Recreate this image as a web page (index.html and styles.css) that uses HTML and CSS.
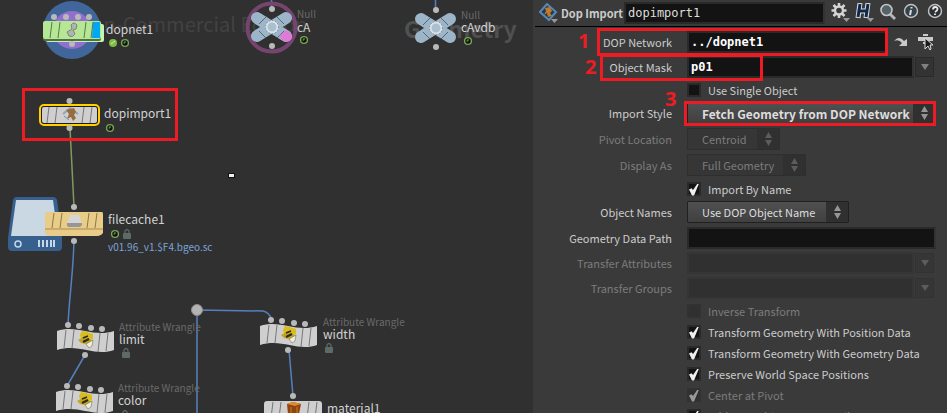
FILE: index.html
```
<!DOCTYPE html>
<html lang="en">
<head>
  <meta charset="UTF-8">
  <title>dopimport1</title>
  <link rel="stylesheet" href="styles.css">
</head>
<body>
  <main class="workspace">
    <section class="network">
      <svg class="graph" width="533" height="413">
        <defs>
          <g id="clock">
            <circle r="3.4" fill="#10130c" stroke="#79a656" stroke-width="1.4"/>
            <path d="M0-2V0H-1.5" fill="none" stroke="#79a656"/>
          </g>
          <g id="lock">
            <path d="M-2 0V-3Q0-6 2-3V0" fill="none" stroke="#5d6a68" stroke-width="1.3"/>
            <rect x="-4" y="-1" width="8" height="6" rx="1" fill="#5d6a68"/>
          </g>
          <g id="ticks" fill="none" stroke="#747474">
            <path d="M9 2L7 18M17 2L15 18M45 2L43 18M53 2L51 18"/>
          </g>
          <g id="wrangle">
            <path d="M0 2C20-5 36 9 57 2V21C38 28 22 14 0 21Z" fill="#cfcfcf"/>
            <path d="M9 1L7 19M17 1L15 19M43 4L41 23M51 4L49 22" stroke="#777" fill="none"/>
            <path d="M23 6L25 2 30 3 36 5 36 10 29 12 24 9Z" fill="#d9bd1d"/>
            <path d="M21 11L28 7 36 12 33 16 24 14Z" fill="#c2a51f"/>
            <path d="M26 9L31 7" stroke="#2b2a1c" stroke-width="1.5"/>
            <path d="M26 13L32 10" stroke="#2b2a1c" stroke-width="2"/>
            <path d="M29 15L36 11 35 17 32 19Z" fill="#eeeedd" stroke="#77734e" stroke-width=".6"/>
            <g fill="#b9b9b9">
              <circle cx="11" cy="-4" r="3"/><circle cx="22" cy="-3" r="3"/>
              <circle cx="34" cy="-1" r="3"/><circle cx="45" cy="0" r="3"/>
              <circle cx="28" cy="26" r="3"/>
            </g>
          </g>
          <g id="null">
            <path d="M-15-9L14 9M-15 9L14-9" stroke="#9db5c8" stroke-width="12" stroke-linecap="round"/>
            <path d="M-13-3L-6-10M5-10L12-3M-13 4L-6 11M5 11L12 4" stroke="#526879" fill="none"/>
            <circle r="5.5" fill="#a9c0d1" stroke="#e0e3e5" stroke-width="2"/>
            <circle r="6.5" fill="none" stroke="#6d8192" stroke-dasharray="1 2"/>
            <circle cy="-18" r="3" fill="#b9b9b9"/><circle cy="19" r="3" fill="#b9b9b9"/>
          </g>
        </defs>

        <text class="edition" x="77" y="32">Non-Commercial Edition</text>
        <text class="context" x="404" y="38">Geometry</text>

        <!-- wires -->
        <g class="wires">
          <path class="green" d="M70 128L74 207"/>
          <path d="M74 241C73 275 69 300 68 325"/>
          <path d="M85 355L67 386"/>
          <path d="M197 413V310L263 311Q269 312 272 320"/>
          <path d="M289 350L293 396"/>
          <path d="M271.500 0V9M435.500 0V9"/>
        </g>

        <!-- dopnet1 -->
        <circle cx="72" cy="30" r="29" fill="#40669b"/>
        <circle cx="72" cy="30" r="19" fill="#9070cc"/>
        <rect x="46" y="24" width="58" height="18" rx="2" fill="#c4f4b1"/>
        <rect x="43" y="22" width="58" height="19" rx="2" fill="#536f48"/>
        <rect x="43" y="21" width="58" height="18" rx="2" fill="#b5e795"/>
        <path d="M93 22H100V38H92Z" fill="#00a8f4"/>
        <path d="M52 22L50 38M60 22L58 38M86 22L84 38M93 22L91 38" stroke="#5d774e"/>
        <path d="M71 25Q74 21 77 25L76 29 73 30 75 34Q73 38 69 36L67 32 72 29Z" fill="#aeb4ae" stroke="#7c857b"/>
        <g fill="#b9b9b9">
          <circle cx="54" cy="17" r="3"/><circle cx="66" cy="17" r="3"/>
          <circle cx="78" cy="17" r="3"/><circle cx="89" cy="17" r="3"/>
          <circle cx="72" cy="44" r="3"/>
        </g>
        <text class="name" x="106" y="34">dopnet1</text>
        <circle cx="113" cy="43" r="4" fill="#7fbb45"/>
        <path d="M111 44L115 41" stroke="#d5edb5"/>
        <use href="#clock" x="125" y="43"/>

        <!-- cA, cAvdb -->
        <circle cx="271.500" cy="27.500" r="24" fill="none" stroke="#75456f" stroke-width="4"/>
        <use href="#null" x="272" y="27"/>
        <path d="M279 36L286 30Q292 33 292 38Q289 43 283 41Z" fill="#df7bd6"/>
        <text class="type" x="297" y="18">Null</text>
        <text class="name" x="297" y="32">cA</text>
        <use href="#clock" x="304" y="40"/>
        <use href="#null" x="436" y="28"/>
        <text class="type" x="461" y="19">Null</text>
        <text class="name" x="461" y="32">cAvdb</text>
        <use href="#clock" x="468" y="41"/>

        <!-- dopimport1 -->
        <rect x="40" y="105" width="59" height="20" rx="4" fill="#1d1d1d" stroke="#ffcf00" stroke-width="2"/>
        <rect x="42" y="107" width="55" height="16" rx="2" fill="#cfcfcf"/>
        <path d="M49 107L47 123M57 107L55 123M84 107L82 123M92 107L90 123" stroke="#777"/>
        <path d="M63 114L70 108 78 114" fill="none" stroke="#88a8c3" stroke-width="2"/>
        <path d="M66 110L74 108 76 112 74 115 76 118 73 121 71 117 67 119 69 114Z" fill="#9a6b3c"/>
        <path d="M64 116L69 120" stroke="#6c93b4"/>
        <circle cx="69.500" cy="101" r="3" fill="#b9b9b9"/>
        <circle cx="69.500" cy="128" r="3" fill="#b9b9b9"/>
        <text class="name" x="104" y="118">dopimport1</text>
        <use href="#clock" x="110" y="128"/>
        <rect x="23.500" y="89.500" width="153" height="50" fill="none" stroke="#ed1c24" stroke-width="3"/>

        <rect x="228" y="173" width="7" height="5" fill="#111"/>
        <rect x="229" y="174" width="5" height="3" fill="#eee"/>

        <!-- filecache1 -->
        <path d="M16 197H53Q56 197 57 200L62 238V247Q62 251 58 251H12Q8 251 8 247V238L13 200Q14 197 16 197Z" fill="#37608f"/>
        <path d="M16 200H53L58 236H11Z" fill="#c9d8e2"/>
        <circle cx="18" cy="244" r="3" fill="none" stroke="#c3d7e6" stroke-width="1.500"/>
        <path d="M39 240V247M43 240V247M47 240V247M51 240V247M54 240V247" stroke="#c3d7e6" stroke-width="2"/>
        <path d="M46 212H102Q103 212 103 214V233Q101 236 98 236H49Q45 235 45 232V213Z" fill="#e8cc88"/>
        <path d="M45 229H103" stroke="#a68c51"/>
        <path d="M54 213L52 228M62 213L60 228M89 213L87 228M97 213L95 228" stroke="#8d7947"/>
        <path d="M70 215H79L82 224H67Z" fill="#d5d5d5"/>
        <path d="M67 223H82V225Q81 227 79 227H70Q67 227 67 225Z" fill="#969696"/>
        <circle cx="74" cy="207" r="3" fill="#b9b9b9"/>
        <circle cx="74" cy="241" r="3" fill="#b9b9b9"/>
        <text class="name" x="108" y="224">filecache1</text>
        <use href="#clock" x="115" y="234"/>
        <use href="#lock" x="127" y="234"/>
        <text class="file" x="108" y="251">v01.96_v1.$F4.bgeo.sc</text>

        <!-- wrangles -->
        <use href="#wrangle" x="57" y="329"/>
        <text class="type" x="119" y="331">Attribute Wrangle</text>
        <text class="name" x="119" y="344">limit</text>
        <use href="#lock" x="126" y="353"/>
        <use href="#wrangle" x="56" y="390"/>
        <text class="type" x="118" y="392">Attribute Wrangle</text>
        <text class="name" x="118" y="405">color</text>
        <use href="#lock" x="125" y="415"/>
        <use href="#wrangle" x="260" y="324"/>
        <text class="type" x="323" y="326">Attribute Wrangle</text>
        <text class="name" x="323" y="339">width</text>
        <use href="#lock" x="329" y="348"/>
        <circle cx="197" cy="310" r="5.500" fill="#b4b4b4" stroke="#8c8c8c"/>

        <!-- material1 -->
        <rect x="264" y="401" width="58" height="20" rx="3" fill="#cfcfcf"/>
        <use href="#ticks" x="264" y="400"/>
        <path d="M287 404L293 402 301 404 299 414H288Z" fill="#8f4510"/>
        <path d="M287 404L293 402 301 404 295 406Z" fill="#e08a2a"/>
        <path d="M291 407V413M297 407V413" stroke="#d87a20"/>
        <circle cx="293" cy="396" r="3" fill="#b9b9b9"/>
        <text class="name" x="327" y="413">material1</text>
      </svg>
    </section>

    <section class="params">
      <header class="titlebar">
        <svg class="node-icon" width="20" height="20">
          <path d="M8 1L17 9 10 17 1 9Z" fill="#263a50" stroke="#5688b8" stroke-width="2"/>
          <path d="M6 5L11 4 13 8 11 10 13 13 9 14 8 10 5 12 7 8Z" fill="#c07a28"/>
          <path d="M12 16H19L15.500 20Z" fill="#999"/>
        </svg>
        <label class="optype" for="opname">Dop Import</label>
        <input id="opname" class="field opname" value="dopimport1">
        <div class="tools">
          <button aria-label="Gear"><svg width="20" height="20">
            <path d="M8 0V15M.500 7.500H15.500M2.500 2L13.500 13M13.500 2L2.500 13" stroke="#d4d4d4" stroke-width="2.600"/>
            <circle cx="8" cy="7.500" r="4" fill="#3a3a3a" stroke="#d4d4d4" stroke-width="2.400"/>
            <path d="M12 15H19L15.500 19Z" fill="#999"/>
          </svg></button>
          <button aria-label="Houdini"><svg width="20" height="20">
            <path d="M5 0L3 15M13 0L11 15M4 8H12" stroke="#d8dde4" stroke-width="5"/>
            <path d="M5 1L3 14M13 1L11 14M4 8H12" stroke="#10284c" stroke-width="3"/>
            <path d="M12 15H19L15.500 19Z" fill="#999"/>
          </svg></button>
          <button aria-label="Search"><svg width="20" height="20">
            <path d="M11 11L16 16" stroke="#b5b5b5" stroke-width="3"/>
            <circle cx="7.500" cy="7" r="5.500" fill="#53636c" stroke="#c4c4c4" stroke-width="1.600"/>
          </svg></button>
          <button aria-label="Info"><svg width="20" height="20">
            <circle cx="8" cy="8" r="6.500" fill="#34434b" stroke="#c4c4c4" stroke-width="1.400"/>
            <path d="M8.500 4V5.500M8 7L7 12" stroke="#ddd" stroke-width="2"/>
          </svg></button>
          <button aria-label="Help"><svg width="20" height="20">
            <circle cx="8" cy="8" r="6.500" fill="#2b3135" stroke="#c4c4c4" stroke-width="1.400"/>
            <path d="M6 6.500Q6 4 8.300 4T10.500 6.200Q10.500 7.500 8 9M8 10.500V12" fill="none" stroke="#eee" stroke-width="1.800"/>
          </svg></button>
        </div>
      </header>

      <form class="parms">
        <div class="row">
          <label for="dopnet">DOP Network</label>
          <input id="dopnet" class="field set" value="../dopnet1">
          <div class="tools jump">
            <button type="button" aria-label="Jump to operator"><svg width="16" height="16">
              <path d="M1 7Q6 1 11 7L14 5V12H6L9 9Q6 5 1 7Z" fill="#c9c9c9"/>
            </svg></button>
            <button type="button" aria-label="Choose operator"><svg width="18" height="18">
              <path d="M6 1H11V3H6ZM1 4H16V8H1ZM6 9H10V11H6Z" fill="#c9c9c9"/>
              <path d="M8 5V16L11 13 13 17 14 16 13 12H16Z" fill="#1b1b1b" stroke="#ddd"/>
            </svg></button>
          </div>
        </div>
        <div class="row">
          <label for="mask">Object Mask</label>
          <input id="mask" class="field set" value="p01">
          <button type="button" class="drop" aria-label="Object menu"></button>
        </div>
        <div class="row check">
          <input type="checkbox" id="single"><label for="single">Use Single Object</label>
        </div>
        <div class="row menu">
          <label for="style">Import Style</label>
          <span class="select wide">
            <select id="style"><option>Fetch Geometry from DOP Network</option></select>
            <svg class="arrows" width="22" height="20"><path d="M8 9L11.500 3 15 9ZM8 11L11.500 17 15 11Z"/></svg>
          </span>
        </div>
        <div class="row menu off">
          <label for="pivot">Pivot Location</label>
          <span class="select short">
            <select id="pivot" disabled><option>Centroid</option></select>
            <svg class="arrows" width="22" height="20"><path d="M8 9L11.500 3 15 9ZM8 11L11.500 17 15 11Z"/></svg>
          </span>
        </div>
        <div class="row menu off">
          <label for="display">Display As</label>
          <span class="select mid">
            <select id="display" disabled><option>Full Geometry</option></select>
            <svg class="arrows" width="22" height="20"><path d="M8 9L11.500 3 15 9ZM8 11L11.500 17 15 11Z"/></svg>
          </span>
        </div>
        <div class="row check">
          <input type="checkbox" id="byname" checked><label for="byname">Import By Name</label>
        </div>
        <div class="row menu">
          <label for="names">Object Names</label>
          <span class="select long">
            <select id="names"><option>Use DOP Object Name</option></select>
            <svg class="arrows" width="22" height="20"><path d="M8 9L11.500 3 15 9ZM8 11L11.500 17 15 11Z"/></svg>
          </span>
        </div>
        <div class="row">
          <label for="path">Geometry Data Path</label>
          <input id="path" class="field">
        </div>
        <div class="row off">
          <label for="attribs">Transfer Attributes</label>
          <input id="attribs" class="field" disabled>
          <button type="button" class="drop" aria-label="Attributes menu" disabled></button>
        </div>
        <div class="row off">
          <label for="groups">Transfer Groups</label>
          <input id="groups" class="field" disabled>
          <button type="button" class="drop" aria-label="Groups menu" disabled></button>
        </div>
        <div class="row check off">
          <input type="checkbox" id="inverse" disabled><label for="inverse">Inverse Transform</label>
        </div>
        <div class="row check">
          <input type="checkbox" id="xpos" checked><label for="xpos">Transform Geometry With Position Data</label>
        </div>
        <div class="row check">
          <input type="checkbox" id="xgeo" checked><label for="xgeo">Transform Geometry With Geometry Data</label>
        </div>
        <div class="row check">
          <input type="checkbox" id="world" checked><label for="world">Preserve World Space Positions</label>
        </div>
        <div class="row check off">
          <input type="checkbox" id="center" checked disabled><label for="center">Center at Pivot</label>
        </div>
        <div class="row check">
          <input type="checkbox" id="addname" checked><label for="addname">Add DOP Object Name Attribute</label>
        </div>
      </form>

      <div class="mark mark-1"><b>1</b></div>
      <div class="mark mark-2"><b>2</b></div>
      <div class="mark mark-3"><b>3</b></div>
    </section>
  </main>
</body>
</html>
```
FILE: styles.css
```
:root {
  --canvas: #303030;
  --panel: #3a3a3a;
  --text: #cccccc;
  --dim: #7c7c7c;
  --red: #ed1c24;
}
* { box-sizing: border-box; margin: 0; padding: 0; }
body {
  background: var(--canvas);
  color: var(--text);
  font: 11px "Noto Sans CJK SC", "Noto Sans", sans-serif;
  overflow: hidden;
}
.workspace {
  display: flex;
  height: 100vh;
}

/* network editor */
.network {
  flex: 1;
  min-width: 0;
  overflow: hidden;
}
.graph { display: block; }
.name { font-size: 12px; fill: #d2d2d2; }
.type { font-size: 10px; fill: #6a6a6a; }
.file { font-size: 10px; fill: #7ba4dc; }
.edition { font-size: 20px; fill: #424242; }
.context { font-size: 23px; font-weight: bold; fill: #505050; }
.wires path { fill: none; stroke: #5580be; stroke-width: 1.5; }
.wires .green { stroke: #7e9b5e; }

/* parameter editor */
.params {
  position: relative;
  flex: 0 0 414px;
  background: var(--panel);
  overflow: hidden;
}
.titlebar {
  display: flex;
  align-items: center;
  height: 27px;
  margin-left: 2px;
  padding-left: 4px;
  border-bottom: 1px solid #000;
}
.node-icon { margin-right: 2px; }
.optype {
  width: 63px;
  font-weight: bold;
  white-space: nowrap;
}
.field {
  flex: 1;
  min-width: 0;
  height: 22px;
  padding: 0 2px;
  border: 2px solid #2a2a2a;
  border-right-color: #333;
  background: #131313;
  color: #ddd;
  font: 12px "DejaVu Sans Mono", monospace;
  outline: none;
}
.field.set { font-weight: bold; color: #fff; }
.field:disabled { background: #303030; border-color: #353535; }
.opname { margin-right: 2px; }
.tools { display: flex; align-items: center; }
.titlebar .tools button {
  display: grid;
  justify-content: end;
  width: 24px;
  height: 20px;
}
.tools button {
  background: none;
  border: none;
  cursor: pointer;
}
.tools svg { display: block; }

.parms { padding: 2px 11px 0 0; }
.row {
  display: flex;
  align-items: center;
  height: 25px;
}
.row > label {
  width: 139px;
  margin-right: 15px;
  text-align: right;
  white-space: nowrap;
}
.row.menu { height: 26px; }
.row.check { height: 21px; padding-left: 154px; }
.row.check label {
  width: auto;
  margin: 0 0 0 7px;
  text-align: left;
}
.off label { color: var(--dim); }
.jump { gap: 8px; padding: 0 1px 0 6px; }

.drop {
  display: grid;
  place-items: center;
  width: 19px;
  height: 20px;
  margin: 0 2px 0 1px;
  border: 1px solid #2a2a2a;
  background: #333;
}
.drop::before {
  content: "";
  border: 4px solid transparent;
  border-top: 6px solid #808080;
  border-bottom: none;
}
.drop:disabled::before { border-top-color: #5c5c5c; }
.drop:disabled { border-color: #323232; background: #363636; }

.select {
  display: grid;
  align-items: center;
}
.select > * { grid-area: 1 / 1; }
.select select {
  appearance: none;
  width: 100%;
  height: 22px;
  padding-left: 14px;
  border: 1px solid #202020;
  border-radius: 1px;
  background: linear-gradient(#505050, #404040);
  color: #ddd;
  font: inherit;
}
.select select:disabled {
  background: #363636;
  border-color: #2e2e2e;
  color: var(--dim);
  opacity: 1;
}
.arrows {
  justify-self: end;
  margin-right: 1px;
  background: #303030;
  pointer-events: none;
}
.arrows path { fill: #969696; }
.off .arrows path { fill: #5c5c5c; }
.select.wide { flex: 1; }
.select.wide select { font-size: 12px; font-weight: bold; }
.select.short { width: 93px; }
.select.mid { width: 119px; }
.select.long { width: 162px; }

input[type="checkbox"] {
  appearance: none;
  flex: none;
  display: grid;
  place-items: center;
  width: 14px;
  height: 14px;
  border: 2px solid #2a2a2a;
  background: #131313;
}
input[type="checkbox"]:checked::before {
  content: "";
  width: 10px;
  height: 12px;
  background: #eeeeee;
  clip-path: polygon(0 50%, 25% 40%, 40% 55%, 85% 0, 100% 0, 50% 100%, 30% 100%);
}
input[type="checkbox"]:disabled { background: #303030; border-color: #323232; }
input[type="checkbox"]:disabled::before { background: #999; }

/* numbered call-outs over the form */
.mark {
  position: absolute;
  border: 3px solid var(--red);
  pointer-events: none;
}
.mark b {
  position: absolute;
  color: var(--red);
  font: bold 20px/20px "Open Sans", sans-serif;
}
.mark-1 { left: 64px; top: 28px; width: 291px; height: 28px; }
.mark-1 b { left: -22px; top: 0; }
.mark-2 { left: 67px; top: 54px; width: 163px; height: 27px; }
.mark-2 b { left: -18px; top: 0; }
.mark-3 { left: 151px; top: 101px; right: 11px; height: 25px; }
.mark-3 b { left: -22px; top: -15px; }
```
